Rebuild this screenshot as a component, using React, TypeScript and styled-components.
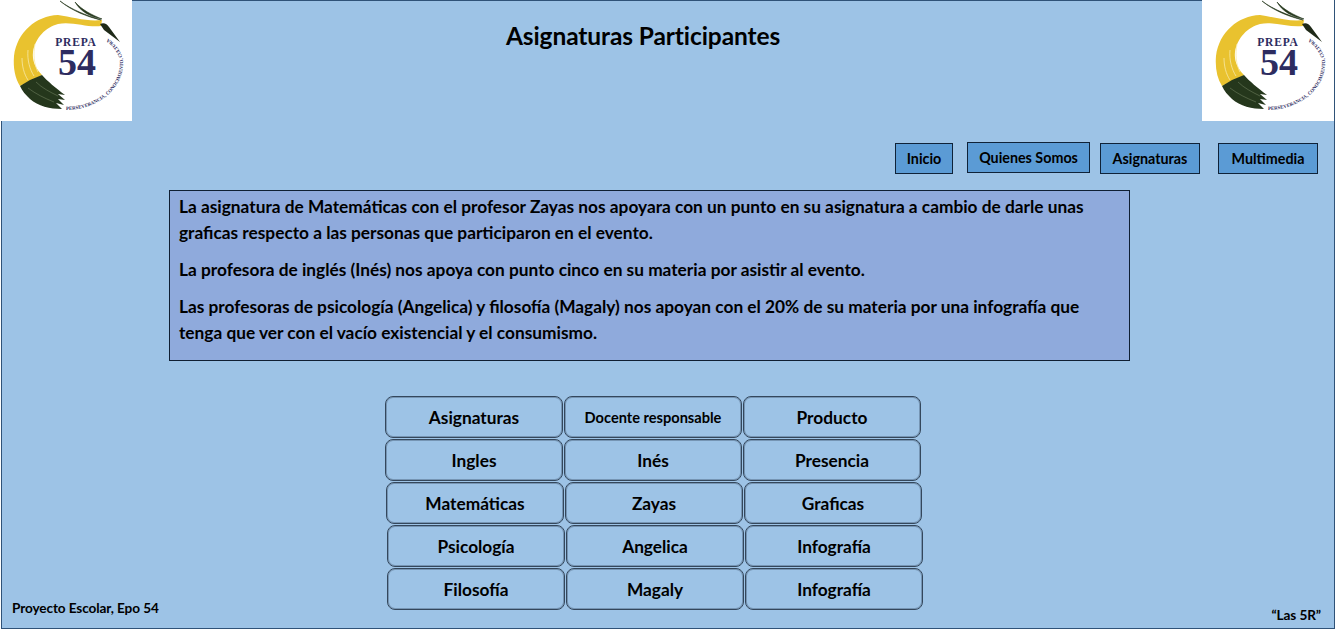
import React from "react";
import styled, { createGlobalStyle } from "styled-components";

const GlobalStyle = createGlobalStyle`
  html, body {
    margin: 0;
    padding: 0;
    background: #ffffff;
  }

  body {
    font-family: "Lato", "Open Sans", "Liberation Sans", sans-serif;
    color: #000000;
  }
`;

const Frame = styled.div`
  box-sizing: border-box;
  width: 1334px;
  height: 629px;
  margin-left: 1px;
  background: #9dc3e6;
  border: 1px solid #2f5278;
  display: flex;
  flex-direction: column;
`;

const Header = styled.header`
  display: flex;
  flex: none;
  justify-content: space-between;
  height: 121px;
  margin: -1px 0 0 -2px;
`;

const LogoBox = styled.div`
  width: 132px;
  height: 121px;
  background: #ffffff;
  flex: none;
`;

const Title = styled.h1`
  margin: 22px 0 0 -48px;
  font-size: 24.5px;
  line-height: 28px;
  font-weight: 700;
  letter-spacing: -0.1px;
`;

const Nav = styled.nav`
  box-sizing: border-box;
  display: flex;
  flex: none;
  align-items: flex-start;
  height: 69px;
  padding-top: 22px;
`;

const NavButton = styled.a<{ $left: number; $width: number; $up?: boolean }>`
  box-sizing: border-box;
  width: ${(p) => p.$width}px;
  height: 31px;
  margin-left: ${(p) => p.$left}px;
  margin-top: ${(p) => (p.$up ? -1 : 0)}px;
  background: #5b9bd5;
  border: 1px solid #0f2238;
  display: flex;
  align-items: center;
  justify-content: center;
  font-size: 14.3px;
  font-weight: 700;
`;

const Panel = styled.section`
  box-sizing: border-box;
  flex: none;
  width: 961px;
  height: 171px;
  margin-left: 167px;
  padding: 3px 10px 0 9px;
  background: #8faadc;
  border: 1px solid #0f1f33;
  font-size: 17.3px;
  font-weight: 700;
  line-height: 26px;
`;

const Paragraph = styled.p`
  margin: 0 0 11px;
`;

const Table = styled.div`
  display: flex;
  flex: none;
  flex-direction: column;
  gap: 1px;
  margin-top: 35px;
`;

const Row = styled.div<{ $shift: number }>`
  display: flex;
  gap: 1px;
  padding-left: ${(p) => p.$shift}px;
`;

const Cell = styled.div<{ $small?: boolean }>`
  box-sizing: border-box;
  width: 178px;
  height: 42px;
  border: 1px solid #34475c;
  box-shadow: inset 0 0 0 1px rgba(60, 80, 105, 0.4);
  border-radius: 8px;
  display: flex;
  align-items: center;
  justify-content: center;
  font-size: ${(p) => (p.$small ? 14.6 : 17.3)}px;
  font-weight: 700;
`;

const Footer = styled.footer`
  display: flex;
  flex: none;
  justify-content: space-between;
  align-items: flex-end;
  margin-top: -9px;
  padding: 0 13px 5px 10px;
`;

const FooterText = styled.span<{ $lift: number }>`
  font-size: 13.6px;
  font-weight: 700;
  letter-spacing: -0.1px;
  line-height: 15px;
  margin-bottom: ${(p) => p.$lift}px;
`;

const Logo = ({ id }: { id: string }) => (
  <LogoBox>
    <svg width="132" height="121" viewBox="0 0 132 121">
      <path
        d="M102 20 C88 22 72 17 58 15 C36 16 17 32 14 56 C13 68 15 78 20 86 L37 78 L42 75 C35 68 32 60 33 52 C35 38 46 27 58 24 C72 21 88 28 101 26 Z"
        fill="#e9c22f"
      />
      <path d="M22 58 C22 66 24 74 28 80 M28 50 C27 60 30 70 34 76 M35 44 C33 54 34 64 38 72" stroke="#f6e9a8" strokeWidth="0.8" fill="none" />
      <path
        d="M20 86 L30 80 L42 75 C47 81 56 88 65 95 L58 94 L65 100 L58 99 L64 105 L56 103 L62 109 C50 109 38 106 30 99 C26 95 22 91 20 86 Z"
        fill="#25371c"
      />
      <path d="M28 88 C36 94 44 98 54 102 M36 82 C42 88 50 92 58 96" stroke="#6d7d5c" strokeWidth="0.6" fill="none" />
      <path d="M100 24 C104 22 107 24 109 27 L120 42 L104 30 Z" fill="#1f2a18" />
      <path d="M60 1 C72 10 86 15 101 20 C88 17 72 11 60 1 Z" fill="#25371c" stroke="#25371c" strokeWidth="0.6" />
      <path d="M75 2 C82 10 92 15 102 19 C90 17 80 11 75 2 Z" fill="#25371c" stroke="#25371c" strokeWidth="0.6" />
      <text x="76" y="46" textAnchor="middle" fontFamily="'Liberation Serif', serif" fontWeight="700" fontSize="11.5" letterSpacing="0.8" fill="#2d2c60">
        PREPA
      </text>
      <text x="77" y="75" textAnchor="middle" fontFamily="'Liberation Serif', serif" fontWeight="700" fontSize="38" fill="#2d2c60">
        54
      </text>
      <defs>
        <path id={id} d="M66 110 C98 110 124 88 123 62 C122 50 113 40 99 33" />
      </defs>
      <text fontFamily="'Liberation Serif', serif" fontWeight="700" fontSize="4.9" fill="#2d2c60">
        <textPath href={`#${id}`}>PERSEVERANCIA, CONOCIMIENTO, CULTURA</textPath>
      </text>
    </svg>
  </LogoBox>
);

const rows = [
  { shift: 383, cells: [["Asignaturas"], ["Docente responsable", "small"], ["Producto"]] },
  { shift: 383, cells: [["Ingles"], ["Inés"], ["Presencia"]] },
  { shift: 384, cells: [["Matemáticas"], ["Zayas"], ["Graficas"]] },
  { shift: 385, cells: [["Psicología"], ["Angelica"], ["Infografía"]] },
  { shift: 385, cells: [["Filosofía"], ["Magaly"], ["Infografía"]] },
];

const App = () => {
  return (
    <>
      <GlobalStyle />
      <Frame>
        <Header>
          <Logo id="ring-left" />
          <Title>Asignaturas Participantes</Title>
          <Logo id="ring-right" />
        </Header>
        <Nav>
          <NavButton $left={893} $width={58}>Inicio</NavButton>
          <NavButton $left={14} $width={123} $up>Quienes Somos</NavButton>
          <NavButton $left={10} $width={100}>Asignaturas</NavButton>
          <NavButton $left={18} $width={100}>Multimedia</NavButton>
        </Nav>
        <Panel>
          <Paragraph>
            La asignatura de Matemáticas con el profesor Zayas nos apoyara con un punto en su asignatura a cambio de darle unas
            <br />
            graficas respecto a las personas que participaron en el evento.
          </Paragraph>
          <Paragraph>La profesora de inglés (Inés) nos apoya con punto cinco en su materia por asistir al evento.</Paragraph>
          <Paragraph>
            Las profesoras de psicología (Angelica) y filosofía (Magaly) nos apoyan con el 20% de su materia por una infografía que
            <br />
            tenga que ver con el vacío existencial y el consumismo.
          </Paragraph>
        </Panel>
        <Table>
          {rows.map((row) => (
            <Row key={row.cells[0][0]} $shift={row.shift}>
              {row.cells.map(([label, size]) => (
                <Cell key={label} $small={size === "small"}>
                  {label}
                </Cell>
              ))}
            </Row>
          ))}
        </Table>
        <Footer>
          <FooterText $lift={7}>Proyecto Escolar, Epo 54</FooterText>
          <FooterText $lift={0}>“Las 5R”</FooterText>
        </Footer>
      </Frame>
    </>
  );
};

export default App;
